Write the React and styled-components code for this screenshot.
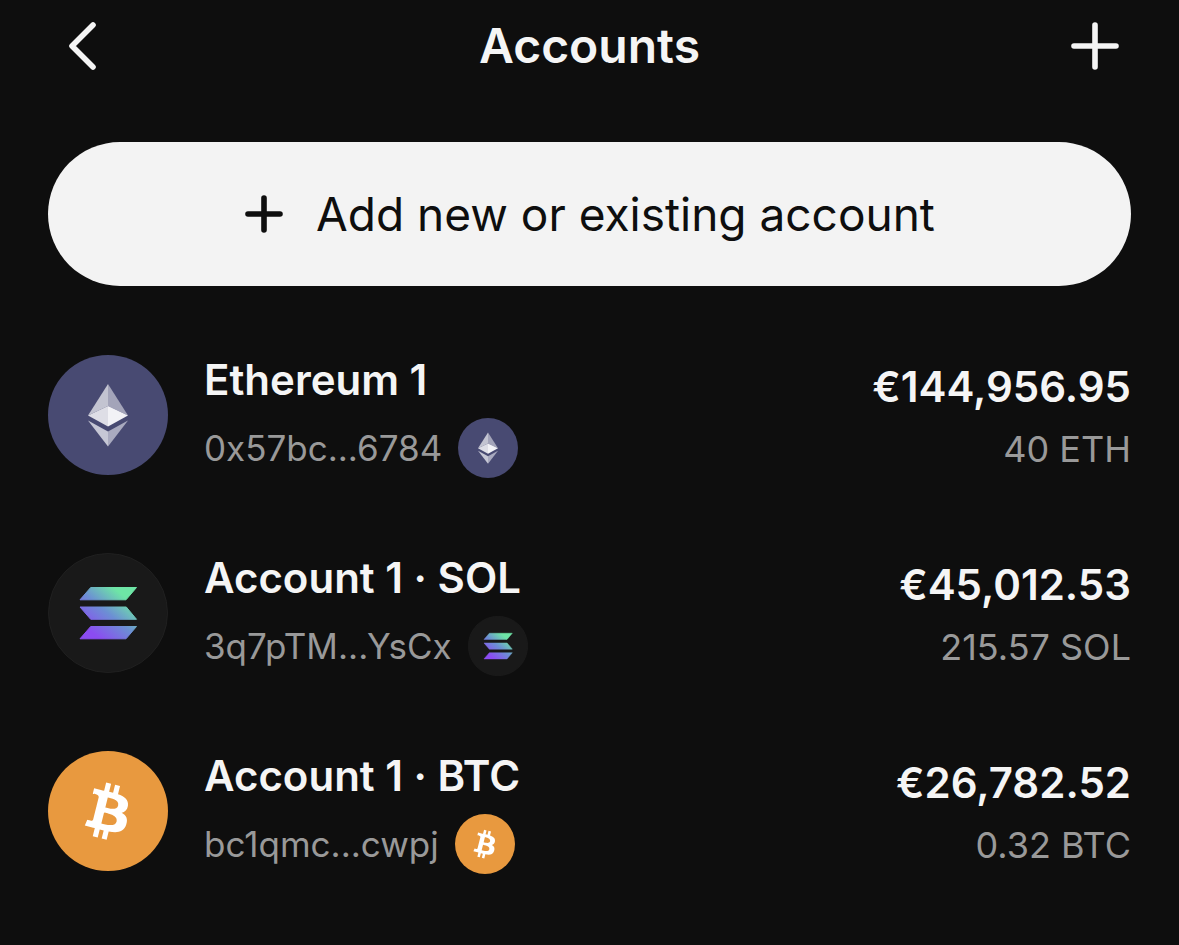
import React, { useId } from "react";
import styled, { createGlobalStyle } from "styled-components";

const GlobalStyle = createGlobalStyle`
  *, *::before, *::after { box-sizing: border-box; }
  body {
    margin: 0;
    background: #0e0e0e;
    color: #f5f5f5;
    font-family: Inter, "Liberation Sans", sans-serif;
  }
`;

const Page = styled.main`
  min-height: 100vh;
  padding: 0 48px 64px;
  background: #0e0e0e;
`;

const Header = styled.header`
  display: grid;
  grid-template-columns: 72px 1fr 72px;
  align-items: center;
  height: 92px;
`;

const Title = styled.h1`
  margin: 0;
  font-size: 48px;
  font-weight: 600;
  line-height: 60px;
  text-align: center;
`;

const IconButton = styled.button`
  display: flex;
  width: 72px;
  height: 72px;
  padding: 0;
  border: 0;
  align-items: center;
  justify-content: center;
  background: none;
  color: inherit;
  cursor: pointer;
`;

const AddButton = styled.button`
  display: flex;
  width: 100%;
  height: 144px;
  margin-top: 50px;
  padding: 0 48px;
  border: 0;
  border-radius: 72px;
  align-items: center;
  justify-content: center;
  gap: 32px;
  background: #f3f3f3;
  color: #0e0e0e;
  font-family: inherit;
  font-size: 46px;
  line-height: 60px;
  cursor: pointer;
`;

const AccountList = styled.ul`
  display: flex;
  flex-direction: column;
  gap: 70px;
  margin: 65px 0 0;
  padding: 0;
  list-style: none;
`;

const AccountRow = styled.li`
  display: flex;
  align-items: center;
  gap: 36px;
`;

const Info = styled.div`
  display: flex;
  flex: 1;
  min-width: 0;
  flex-direction: column;
  gap: 10px;
`;

const Name = styled.h2`
  margin: 0;
  font-size: 42px;
  font-weight: 600;
  line-height: 56px;
`;

const AddressLine = styled.div`
  display: flex;
  align-items: center;
  gap: 16px;
`;

const Muted = styled.span`
  color: #999999;
  font-size: ${(p) => p.$size}px;
  line-height: 60px;
`;

const Balance = styled.div`
  display: flex;
  flex-direction: column;
  align-items: flex-end;
  gap: 4px;
  padding-top: 8px;
`;

const Amount = styled.strong`
  font-size: 42px;
  font-weight: 600;
  line-height: 56px;
`;

const Coin = styled.svg`
  display: block;
  flex: none;
  width: ${(p) => p.$size}px;
  height: ${(p) => p.$size}px;
`;

function EthCoin({ size }) {
  return (
    <Coin $size={size} viewBox="0 0 120 120" aria-hidden="true">
      <circle cx="60" cy="60" r="60" fill="#484a72" />
      <path d="M60 29 40 60.5 60 51z" fill="#c3c4d1" />
      <path d="M60 29 80 60.5 60 51z" fill="#a3a4b9" />
      <path d="M60 51 40 60.5 60 71.5z" fill="#dedee6" />
      <path d="M60 51 80 60.5 60 71.5z" fill="#f2f2f6" />
      <path d="M40 65.5 60 76.5V91.5z" fill="#c6c7d5" />
      <path d="M80 65.5 60 76.5V91.5z" fill="#a9aabf" />
    </Coin>
  );
}

function SolCoin({ size }) {
  const id = useId();
  return (
    <Coin $size={size} viewBox="0 0 120 120" aria-hidden="true">
      <defs>
        <linearGradient id={id} gradientUnits="userSpaceOnUse" x1="37" y1="88" x2="83" y2="32">
          <stop offset="0.15" stopColor="#8b4cf2" />
          <stop offset="0.5" stopColor="#6c8fd4" />
          <stop offset="0.82" stopColor="#6ee5a6" />
        </linearGradient>
      </defs>
      <circle cx="60" cy="60" r="59.5" fill="#191919" stroke="#202020" />
      <g fill={`url(#${id})`} stroke={`url(#${id})`} strokeLinejoin="round">
        <path d="M42.7 34.5H88.5L78 46.8H32z" />
        <path d="M32 54H78.3L88.5 66.3H42.7z" />
        <path d="M42.7 73.500H88.5L78 85.800H32z" />
      </g>
    </Coin>
  );
}

function BtcCoin({ size }) {
  return (
    <Coin $size={size} viewBox="0 0 120 120" aria-hidden="true">
      <circle cx="60" cy="60" r="60" fill="#e8993f" />
      <path
        transform="translate(13.4 14.3) scale(2.87)"
        fill="#ffffff"
        d="M23.189 14.02c.314-2.096-1.283-3.223-3.465-3.975l.708-2.84-1.728-.43-.69 2.765c-.454-.114-.92-.22-1.385-.326l.695-2.783L15.596 6l-.708 2.839c-.376-.086-.746-.17-1.104-.26l.002-.009-2.384-.595-.46 1.846s1.283.294 1.256.312c.7.175.826.638.805 1.006l-.806 3.235c.048.012.11.03.18.057l-.183-.045-1.13 4.532c-.086.212-.303.531-.793.41.018.025-1.256-.313-1.256-.313l-.858 1.978 2.25.561c.418.105.828.215 1.231.318l-.715 2.872 1.727.43.708-2.84c.472.127.93.245 1.378.357l-.706 2.828 1.728.43.715-2.866c2.948.558 5.164.333 6.097-2.333.752-2.146-.037-3.385-1.588-4.192 1.13-.26 1.98-1.003 2.207-2.538zm-3.95 5.538c-.533 2.147-4.148.986-5.32.695l.95-3.805c1.172.293 4.929.872 4.37 3.11zm.535-5.569c-.487 1.953-3.495.96-4.47.717l.86-3.45c.975.243 4.118.696 3.61 2.733z"
      />
    </Coin>
  );
}

const accounts = [
  { name: "Ethereum 1", address: "0x57bc...6784", fiat: "€144,956.95", amount: "40 ETH", Icon: EthCoin },
  { name: "Account 1 · SOL", address: "3q7pTM...YsCx", fiat: "€45,012.53", amount: "215.57 SOL", Icon: SolCoin },
  { name: "Account 1 · BTC", address: "bc1qmc...cwpj", fiat: "€26,782.52", amount: "0.32 BTC", Icon: BtcCoin },
];

export default function App() {
  return (
    <>
      <GlobalStyle />
      <Page>
        <Header>
          <IconButton type="button" aria-label="Back">
            <svg width="72" height="72" viewBox="0 0 72 72" fill="none" stroke="currentColor" strokeWidth="5.600" strokeLinecap="round" strokeLinejoin="round">
              <path d="M45 15 24 36 45 57" />
            </svg>
          </IconButton>
          <Title>Accounts</Title>
          <IconButton type="button" aria-label="Add account">
            <svg width="72" height="72" viewBox="0 0 72 72" fill="none" stroke="currentColor" strokeWidth="5.600" strokeLinecap="round">
              <path d="M36 15V57M15 36H57" />
            </svg>
          </IconButton>
        </Header>
        <AddButton type="button">
          <svg width="40" height="40" viewBox="0 0 40 40" fill="none" stroke="currentColor" strokeWidth="5.600" strokeLinecap="round" aria-hidden="true">
            <path d="M20 4V36M4 20H36" />
          </svg>
          Add new or existing account
        </AddButton>
        <AccountList>
          {accounts.map(({ name, address, fiat, amount, Icon }) => (
            <AccountRow key={name}>
              <Icon size={120} />
              <Info>
                <Name>{name}</Name>
                <AddressLine>
                  <Muted $size={35}>{address}</Muted>
                  <Icon size={60} />
                </AddressLine>
              </Info>
              <Balance>
                <Amount>{fiat}</Amount>
                <Muted $size={36}>{amount}</Muted>
              </Balance>
            </AccountRow>
          ))}
        </AccountList>
      </Page>
    </>
  );
}
